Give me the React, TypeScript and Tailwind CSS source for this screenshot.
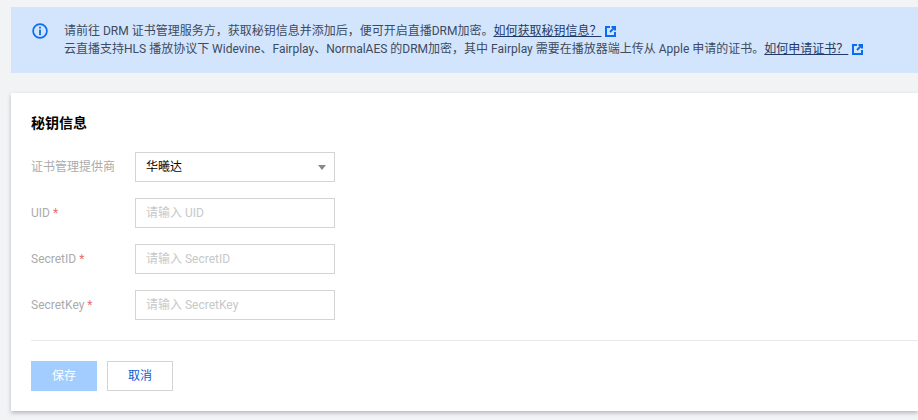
const FONT = "font-['Roboto','Noto_Sans_CJK_SC',sans-serif]";

function LinkIcon() {
  return (
    <svg viewBox="0 0 11 11" className="ml-1 inline-block h-[11px] w-[11px] shrink-0" fill="none" stroke="#0a6cf0" strokeWidth="2">
      <path d="M5 1H1v9h9V6" />
      <path d="M6.5 1H10v3.5" />
      <path d="M9.6 1.4 5 6" />
    </svg>
  );
}

function Field({ label, placeholder }: { label: string; placeholder: string }) {
  return (
    <div className="flex h-[30px] items-center">
      <div className="w-[104px] text-xs text-[#ababab]">
        {label} <span className="text-[#e87070]">*</span>
      </div>
      <div className="flex h-[30px] w-[200px] items-center border border-[#d4d4d4] px-[10px] text-xs text-[#c8c8c8]">
        {placeholder}
      </div>
    </div>
  );
}

export default function App() {
  return (
    <div className={`h-[420px] w-[918px] overflow-hidden bg-[#f2f3f5] pl-[11px] pt-[7px] ${FONT}`}>
      <div className="flex h-[66px] items-start bg-[#d3e5fc] pl-[21px] pt-[15px] text-xs leading-[18px] text-[#3d4a5f]">
        <svg viewBox="0 0 16 16" className="mt-[1px] h-4 w-4 shrink-0" fill="none">
          <circle cx="8" cy="8" r="6.9" stroke="#0a6cf0" strokeWidth="1.7" />
          <rect x="7.1" y="3.7" width="1.8" height="1.8" fill="#0a6cf0" />
          <rect x="7.1" y="6.6" width="1.8" height="5.6" fill="#0a6cf0" />
        </svg>
        <div className="ml-4 whitespace-nowrap">
          <div className="flex items-center">
            <span>请前往 DRM 证书管理服务方，获取秘钥信息并添加后，便可开启直播DRM加密。</span>
            <span className="text-[#1f3a66] underline">如何获取秘钥信息？</span>
            <LinkIcon />
          </div>
          <div className="flex items-center">
            <span>云直播支持HLS 播放协议下 Widevine、Fairplay、NormalAES 的DRM加密，其中 Fairplay 需要在播放器端上传从 Apple 申请的证书。</span>
            <span className="text-[#1f3a66] underline">如何申请证书？</span>
            <LinkIcon />
          </div>
        </div>
      </div>

      <div className="mt-5 h-[318px] bg-white pl-5 pt-5 shadow-[0_2px_4px_rgba(54,58,80,0.32)]">
        <h2 className="text-sm font-bold leading-[20px] text-black">秘钥信息</h2>
        <div className="mt-[19px] flex flex-col gap-4">
          <div className="flex h-[30px] items-center">
            <div className="w-[104px] text-xs text-[#ababab]">证书管理提供商</div>
            <div className="flex h-[30px] w-[200px] items-center justify-between border border-[#d4d4d4] pl-[10px] pr-[8px] text-xs text-black">
              <span>华曦达</span>
              <span className="h-0 w-0 border-x-[4px] border-t-[5px] border-x-transparent border-t-[#888888]" />
            </div>
          </div>
          <Field label="UID" placeholder="请输入 UID" />
          <Field label="SecretID" placeholder="请输入 SecretID" />
          <Field label="SecretKey" placeholder="请输入 SecretKey" />
        </div>
        <div className="mt-5 border-t border-[#e9e9e9]" />
        <div className="mt-5 flex gap-[10px]">
          <div className="flex h-[30px] w-[66px] items-center justify-center bg-[#a3ccff] text-xs text-white">保存</div>
          <div className="flex h-[30px] w-[66px] items-center justify-center border border-[#d4d4d4] text-xs text-[#0a5bd0]">取消</div>
        </div>
      </div>
    </div>
  );
}
